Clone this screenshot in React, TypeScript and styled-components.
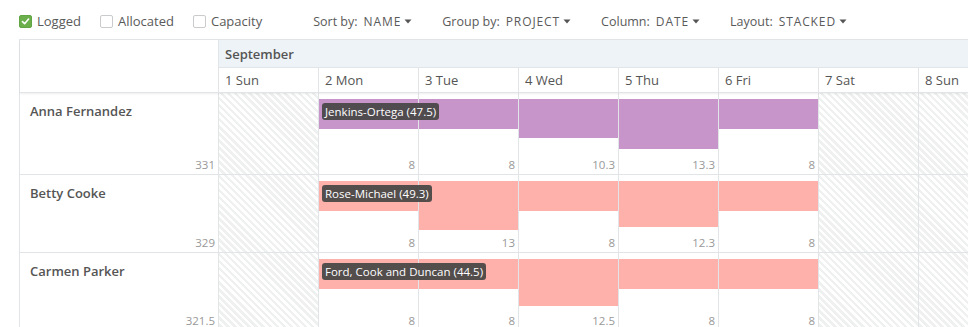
import React from "react";
import styled, { createGlobalStyle, css } from "styled-components";

const HOUR_PX = 3.75;

const GlobalStyle = createGlobalStyle`
  html, body {
    margin: 0;
    padding: 0;
    background: #fff;
    overflow: hidden;
  }
  body {
    font-family: "Open Sans", "Noto Sans", sans-serif;
    color: #555;
  }
`;

type Row = {
  name: string;
  total: string;
  color: string;
  project: string;
  hours: (number | null)[];
  height: number;
};

const days = [
  { label: "1 Sun", off: true },
  { label: "2 Mon", off: false },
  { label: "3 Tue", off: false },
  { label: "4 Wed", off: false },
  { label: "5 Thu", off: false },
  { label: "6 Fri", off: false },
  { label: "7 Sat", off: true },
  { label: "8 Sun", off: true },
];

const rows: Row[] = [
  {
    name: "Anna Fernandez",
    total: "331",
    color: "#c795c9",
    project: "Jenkins-Ortega (47.5)",
    hours: [null, 8, 8, 10.3, 13.3, 8, null, null],
    height: 82,
  },
  {
    name: "Betty Cooke",
    total: "329",
    color: "#feb0aa",
    project: "Rose-Michael (49.3)",
    hours: [null, 8, 13, 8, 12.3, 8, null, null],
    height: 78,
  },
  {
    name: "Carmen Parker",
    total: "321.5",
    color: "#feb0aa",
    project: "Ford, Cook and Duncan (44.5)",
    hours: [null, 8, 8, 12.5, 8, 8, null, null],
    height: 78,
  },
];

const Page = styled.div`
  width: 968px;
  height: 327px;
  overflow: hidden;
`;

const Toolbar = styled.div`
  display: flex;
  align-items: center;
  height: 36px;
  padding: 3px 0 0 19px;
  font-size: 12.5px;
  color: #5a5a5a;
`;

const CheckGroup = styled.div`
  display: flex;
  align-items: center;
  gap: 19px;
  margin-right: 51px;
  font-size: 13px;
`;

const CheckItem = styled.label`
  display: flex;
  align-items: center;
  gap: 5px;
`;

const Box = styled.span<{ $checked?: boolean }>`
  width: 13px;
  height: 13px;
  box-sizing: border-box;
  border-radius: 2px;
  display: flex;
  align-items: center;
  justify-content: center;
  ${(p) =>
    p.$checked
      ? css`
          background: #6aaf4c;
          border: 1px solid #62a544;
        `
      : css`
          background: #fff;
          border: 1px solid #c9cbcc;
        `}
`;

const Selects = styled.div`
  display: flex;
  align-items: center;
  gap: 30px;
`;

const Select = styled.div`
  display: flex;
  align-items: center;
`;

const SelectLabel = styled.span`
  margin-right: 6px;
`;

const SelectValue = styled.span`
  text-transform: uppercase;
  letter-spacing: 0.9px;
  font-size: 12px;
  margin-right: 3px;
`;

const Board = styled.div`
  margin-left: 19px;
  border-left: 1px solid #e2e5e7;
  border-top: 1px solid #e2e5e7;
  width: 1000px;
`;

const Header = styled.div`
  display: grid;
  grid-template-columns: 199px repeat(8, 100px);
  grid-template-rows: 28px 25px;
  position: relative;
  z-index: 2;
  box-shadow: 0 1px 2px rgba(0, 0, 0, 0.07);
`;

const Corner = styled.div`
  grid-row: 1 / span 2;
  border-right: 1px solid #e2e5e7;
  border-bottom: 1px solid #e2e5e7;
  background: #fff;
`;

const Month = styled.div`
  grid-column: 2 / span 8;
  background: #edf3f6;
  border-bottom: 1px solid #e2e5e7;
  box-sizing: border-box;
  padding-left: 6px;
  display: flex;
  align-items: center;
  font-size: 13px;
  font-weight: 600;
  color: #555;
`;

const DayHead = styled.div`
  box-sizing: border-box;
  border-right: 1px solid #e2e5e7;
  border-bottom: 1px solid #e2e5e7;
  padding-left: 6px;
  display: flex;
  align-items: center;
  font-size: 13px;
  color: #555;
  background: #fff;
`;

const RowGrid = styled.div<{ $height: number }>`
  display: grid;
  grid-template-columns: 199px repeat(8, 100px);
  height: ${(p) => p.$height}px;
`;

const cellLines = css`
  box-sizing: border-box;
  border-right: 1px solid #e2e5e7;
  border-bottom: 1px solid #e2e5e7;
`;

const PersonCell = styled.div`
  ${cellLines};
  display: flex;
  flex-direction: column;
  justify-content: space-between;
  padding: 9px 3px 2px 10px;
  background: #fff;
`;

const Name = styled.div`
  font-size: 13px;
  font-weight: 600;
  color: #555;
  line-height: 18px;
`;

const Total = styled.div`
  text-align: right;
  font-size: 11.5px;
  color: #999;
  line-height: 15px;
`;

const DayCell = styled.div<{ $off?: boolean }>`
  ${cellLines};
  position: relative;
  display: flex;
  flex-direction: column;
  padding-top: 6px;
  background: ${(p) =>
    p.$off
      ? "repeating-linear-gradient(45deg, #fff 0 2.5px, #eef1f0 2.5px 5px)"
      : "#fff"};
`;

const Bar = styled.div<{ $color: string }>`
  background: ${(p) => p.$color};
  flex: none;
`;

const Hours = styled.div`
  margin-top: auto;
  text-align: right;
  padding: 0 3px 2px 0;
  font-size: 11.5px;
  line-height: 15px;
  color: #999;
`;

const Tag = styled.span`
  position: absolute;
  top: 10px;
  left: 3px;
  z-index: 1;
  white-space: nowrap;
  background: rgba(68, 68, 68, 0.92);
  color: #fff;
  font-size: 11.5px;
  line-height: 17px;
  padding: 0 3px;
  border-radius: 3px;
`;

const Check = () => (
  <svg width="9" height="9" viewBox="0 0 9 9">
    <path
      d="M1.5 4.6 L3.6 6.7 L7.6 2"
      fill="none"
      stroke="#fff"
      strokeWidth="1.6"
      strokeLinecap="round"
      strokeLinejoin="round"
    />
  </svg>
);

const Caret = () => (
  <svg width="8" height="5" viewBox="0 0 8 5">
    <path d="M0.5 0.5 H7.5 L4 4.5 Z" fill="#555" />
  </svg>
);

const options = [
  { label: "Sort by:", value: "Name" },
  { label: "Group by:", value: "Project" },
  { label: "Column:", value: "Date" },
  { label: "Layout:", value: "Stacked" },
];

export default function App() {
  return (
    <Page>
      <GlobalStyle />
      <Toolbar>
        <CheckGroup>
          <CheckItem>
            <Box $checked>
              <Check />
            </Box>
            Logged
          </CheckItem>
          <CheckItem>
            <Box />
            Allocated
          </CheckItem>
          <CheckItem>
            <Box />
            Capacity
          </CheckItem>
        </CheckGroup>
        <Selects>
          {options.map((o) => (
            <Select key={o.label}>
              <SelectLabel>{o.label}</SelectLabel>
              <SelectValue>{o.value}</SelectValue>
              <Caret />
            </Select>
          ))}
        </Selects>
      </Toolbar>
      <Board>
        <Header>
          <Corner />
          <Month>September</Month>
          {days.map((d) => (
            <DayHead key={d.label}>{d.label}</DayHead>
          ))}
        </Header>
        {rows.map((r) => (
          <RowGrid key={r.name} $height={r.height}>
            <PersonCell>
              <Name>{r.name}</Name>
              <Total>{r.total}</Total>
            </PersonCell>
            {days.map((d, i) => {
              const h = r.hours[i];
              return (
                <DayCell key={d.label} $off={d.off}>
                  {h != null && (
                    <>
                      <Bar
                        $color={r.color}
                        style={{ height: h * HOUR_PX }}
                      />
                      <Hours>{h}</Hours>
                    </>
                  )}
                  {i === 1 && <Tag>{r.project}</Tag>}
                </DayCell>
              );
            })}
          </RowGrid>
        ))}
      </Board>
    </Page>
  );
}
